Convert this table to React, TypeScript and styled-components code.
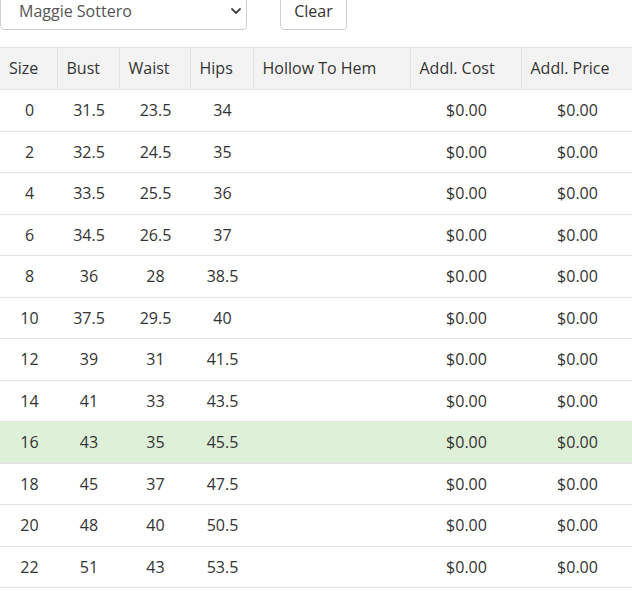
import React from "react";
import styled, { createGlobalStyle } from "styled-components";

const Global = createGlobalStyle`
  html, body { margin: 0; padding: 0; background: #fff; }
  body { font-family: "Open Sans", "Liberation Sans", sans-serif; font-size: 16px; color: #333; }
`;

const Page = styled.div`
  margin-top: -8px;
`;

const Toolbar = styled.div`
  display: flex;
  align-items: center;
  gap: 33px;
  margin-bottom: 17px;
`;

const SelectWrap = styled.div`
  position: relative;
  width: 247px;
  height: 38px;
`;

const Select = styled.select`
  appearance: none;
  -webkit-appearance: none;
  width: 100%;
  height: 100%;
  box-sizing: border-box;
  border: 1px solid #cfcfcf;
  border-radius: 4px;
  background: #fff;
  padding: 0 30px 0 18px;
  font-family: inherit;
  font-size: 16px;
  color: #555;
  outline: none;
`;

const Chevron = styled.svg`
  position: absolute;
  right: 5px;
  top: 15px;
  width: 12px;
  height: 8px;
  pointer-events: none;
`;

const Button = styled.button`
  height: 38px;
  width: 67px;
  box-sizing: border-box;
  border: 1px solid #cfcfcf;
  border-radius: 4px;
  background: #fff;
  font-family: inherit;
  font-size: 16px;
  color: #333;
  padding: 0;
`;

const Table = styled.table`
  width: 632px;
  table-layout: fixed;
  border-collapse: collapse;
`;

const Th = styled.th`
  text-align: left;
  font-weight: 400;
  background: #f3f3f3;
  border-top: 1px solid #e3e3e3;
  border-bottom: 1px solid #e3e3e3;
  border-left: 1px solid #e3e3e3;
  padding: 0 0 2px 9px;
  height: 42px;
  box-sizing: border-box;
  &:first-child { border-left: none; }
`;

const Tr = styled.tr<{ $hl?: boolean }>`
  background: ${(p) => (p.$hl ? "#dff0d8" : "#fff")};
`;

const Td = styled.td`
  text-align: center;
  padding: 8px 0 8px 2px;
  line-height: 24.5px;
  border-bottom: 1px solid #e3e3e3;
`;

const widths = [57, 62, 71, 63, 157, 111, 111];
const headers = ["Size", "Bust", "Waist", "Hips", "Hollow To Hem", "Addl. Cost", "Addl. Price"];

const rows: [string, string, string, string][] = [
  ["0", "31.5", "23.5", "34"],
  ["2", "32.5", "24.5", "35"],
  ["4", "33.5", "25.5", "36"],
  ["6", "34.5", "26.5", "37"],
  ["8", "36", "28", "38.5"],
  ["10", "37.5", "29.5", "40"],
  ["12", "39", "31", "41.5"],
  ["14", "41", "33", "43.5"],
  ["16", "43", "35", "45.5"],
  ["18", "45", "37", "47.5"],
  ["20", "48", "40", "50.5"],
  ["22", "51", "43", "53.5"],
];

export default function App() {
  return (
    <Page>
      <Global />
      <Toolbar>
        <SelectWrap>
          <Select defaultValue="ms">
            <option value="ms">Maggie Sottero</option>
          </Select>
          <Chevron viewBox="0 0 12 8">
            <path d="M2 2 L6 6 L10 2" fill="none" stroke="#444" strokeWidth="1.8" strokeLinecap="round" strokeLinejoin="round" />
          </Chevron>
        </SelectWrap>
        <Button>Clear</Button>
      </Toolbar>
      <Table>
        <colgroup>
          {widths.map((w, i) => (
            <col key={i} style={{ width: w }} />
          ))}
        </colgroup>
        <thead>
          <tr>
            {headers.map((h) => (
              <Th key={h}>{h}</Th>
            ))}
          </tr>
        </thead>
        <tbody>
          {rows.map((r) => (
            <Tr key={r[0]} $hl={r[0] === "16"}>
              <Td>{r[0]}</Td>
              <Td>{r[1]}</Td>
              <Td>{r[2]}</Td>
              <Td>{r[3]}</Td>
              <Td></Td>
              <Td>$0.00</Td>
              <Td>$0.00</Td>
            </Tr>
          ))}
        </tbody>
      </Table>
    </Page>
  );
}
